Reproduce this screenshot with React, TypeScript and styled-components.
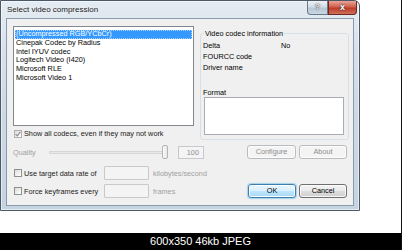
import { Fragment } from "react";
import styled, { createGlobalStyle } from "styled-components";

const GlobalStyle = createGlobalStyle`
  html, body {
    margin: 0;
    padding: 0;
    background: #fff;
  }
  body {
    font-family: "Liberation Sans", Arial, sans-serif;
    font-size: 7.3px;
    color: #000;
  }
`;

const codecs = [
  "(Uncompressed RGB/YCbCr)",
  "Cinepak Codec by Radius",
  "Intel IYUV codec",
  "Logitech Video (I420)",
  "Microsoft RLE",
  "Microsoft Video 1",
];

const info = [
  ["Delta", "No"],
  ["FOURCC code", ""],
  ["Driver name", ""],
];

function CheckMark({ muted }: { muted?: boolean }) {
  return (
    <svg width="6" height="6" viewBox="0 0 6 6">
      <path
        d="M0.6 3.1 L2.3 4.8 L5.4 0.8"
        fill="none"
        stroke={muted ? "#8c8c8c" : "#2a4a6e"}
        strokeWidth="1.1"
      />
    </svg>
  );
}

export default function App() {
  return (
    <>
      <GlobalStyle />
      <Page>
        <Stage>
          <Window>
            <TitleBar>
              <Title>Select video compression</Title>
              <Caption>
                <CaptionButton $w={21}>?</CaptionButton>
                <CaptionButton $w={29} $close>
                  x
                </CaptionButton>
              </Caption>
            </TitleBar>
            <Client>
              <TopRow>
                <LeftCol>
                  <ListBox>
                    {codecs.map((c, i) => (
                      <ListItem key={c} $selected={i === 0}>
                        {c}
                      </ListItem>
                    ))}
                  </ListBox>
                  <CheckRow>
                    <Check $muted>
                      <CheckMark muted />
                    </Check>
                    <CheckLabel>Show all codecs, even if they may not work</CheckLabel>
                  </CheckRow>
                </LeftCol>
                <GroupBox>
                  <Legend>Video codec information</Legend>
                  <InfoGrid>
                    {info.map(([k, v]) => (
                      <Fragment key={k}>
                        <span>{k}</span>
                        <span>{v}</span>
                      </Fragment>
                    ))}
                  </InfoGrid>
                  <FormatLabel>Format</FormatLabel>
                  <FormatBox />
                </GroupBox>
              </TopRow>

              <QualityRow>
                <QualityLabel>Quality</QualityLabel>
                <Slider>
                  <Track />
                  <Thumb />
                </Slider>
                <NumberBox>100</NumberBox>
                <Spacer />
                <Buttons>
                  <Button $w={49} $disabled>
                    Configure
                  </Button>
                  <Button $w={48} $disabled>
                    About
                  </Button>
                </Buttons>
              </QualityRow>

              <OptionRow $top={7}>
                <Check />
                <OptionLabel>Use target data rate of</OptionLabel>
                <TextBox />
                <Unit>kilobytes/second</Unit>
              </OptionRow>

              <OptionRow $top={4}>
                <Check />
                <OptionLabel>Force keyframes every</OptionLabel>
                <TextBox />
                <Unit>frames</Unit>
                <Spacer />
                <Buttons>
                  <Button $w={48} $default>
                    OK
                  </Button>
                  <Button $w={48}>Cancel</Button>
                </Buttons>
              </OptionRow>
            </Client>
          </Window>
        </Stage>
        <Footer>600x350 46kb JPEG</Footer>
      </Page>
    </>
  );
}

const Page = styled.div`
  width: 402px;
  height: 250px;
  box-sizing: border-box;
  border-right: 1px solid #111;
  display: flex;
  flex-direction: column;
  overflow: hidden;
`;

const Stage = styled.div`
  height: 233px;
  background: #fff;
`;

const Footer = styled.div`
  height: 17px;
  background: #000;
  color: #fff;
  font-size: 11px;
  line-height: 17px;
  text-align: center;
`;

const Window = styled.div`
  width: 360px;
  height: 211px;
  box-sizing: border-box;
  border: 1px solid #4a5867;
  border-top-right-radius: 6px;
  background: linear-gradient(180deg, #e4ebf2 0%, #cfdae6 45%, #c6d3e0 100%);
  box-shadow: inset 0 0 0 1px rgba(255, 255, 255, 0.55);
  padding: 0 5px 4px 5px;
  display: flex;
  flex-direction: column;
`;

const TitleBar = styled.div`
  height: 17px;
  display: flex;
  align-items: flex-start;
`;

const Title = styled.div`
  font-size: 8px;
  line-height: 18px;
  padding-left: 1px;
  color: #1a1a1a;
  text-shadow: 0 0 4px rgba(255, 255, 255, 0.9);
`;

const Caption = styled.div`
  margin-left: auto;
  margin-right: -3px;
  display: flex;
`;

const CaptionButton = styled.div<{ $w: number; $close?: boolean }>`
  width: ${(p) => p.$w}px;
  height: 14px;
  box-sizing: border-box;
  border: 1px solid ${(p) => (p.$close ? "#6b2a22" : "#6a7a8a")};
  border-top: none;
  border-radius: ${(p) => (p.$close ? "0 0 4px 0" : "0 0 0 4px")};
  background: ${(p) =>
    p.$close
      ? "linear-gradient(180deg, #e8a597 0%, #d0614f 45%, #bd3b2a 55%, #d0705a 100%)"
      : "linear-gradient(180deg, #eef2f6 0%, #d2dce6 45%, #b8c6d4 55%, #cad7e3 100%)"};
  color: #fff;
  font-weight: bold;
  font-size: ${(p) => (p.$close ? "9px" : "8px")};
  line-height: 12px;
  text-align: center;
  text-shadow: 0 0 2px #333, 0 0 1px #333;
`;

const Client = styled.div`
  flex: 1;
  background: #f0f0f0;
  border: 1px solid #8a9bad;
  padding: 7px 0 0 6px;
  display: flex;
  flex-direction: column;
`;

const TopRow = styled.div`
  display: flex;
  align-items: flex-start;
`;

const LeftCol = styled.div`
  width: 181px;
  display: flex;
  flex-direction: column;
`;

const ListBox = styled.div`
  height: 100px;
  box-sizing: border-box;
  border: 1px solid #828790;
  background: #fff;
  padding: 3px 1px 0 1px;
`;

const ListItem = styled.div<{ $selected?: boolean }>`
  height: 8.8px;
  line-height: 8.8px;
  padding-left: 1px;
  white-space: nowrap;
  color: ${(p) => (p.$selected ? "#fff" : "#000")};
  background: ${(p) => (p.$selected ? "#3399ff" : "transparent")};
  outline: ${(p) => (p.$selected ? "1px dotted #a9d0ff" : "none")};
  outline-offset: -1px;
`;

const CheckRow = styled.div`
  margin-top: 4px;
  height: 8px;
  display: flex;
  align-items: center;
`;

const Check = styled.span<{ $muted?: boolean }>`
  width: 8px;
  height: 8px;
  box-sizing: border-box;
  flex: none;
  margin-left: 1px;
  border: 1px solid ${(p) => (p.$muted ? "#b1b1b1" : "#8e8f8f")};
  background: linear-gradient(135deg, #dadada 0%, #f6f6f6 70%, #fff 100%);
  display: flex;
  align-items: center;
  justify-content: center;
`;

const CheckLabel = styled.span`
  margin-left: 2px;
  line-height: 8px;
  white-space: nowrap;
  color: #222;
`;

const GroupBox = styled.div`
  position: relative;
  width: 149px;
  height: 107px;
  box-sizing: border-box;
  margin: 7px 0 0 6px;
  border: 1px solid #d5dfe5;
  border-radius: 3px;
  padding: 6px 0 0 2px;
  display: flex;
  flex-direction: column;
`;

const Legend = styled.span`
  position: absolute;
  top: -5px;
  left: 3px;
  padding: 0 1px;
  line-height: 9px;
  background: #f0f0f0;
  white-space: nowrap;
`;

const InfoGrid = styled.div`
  display: grid;
  grid-template-columns: 78px auto;
  grid-auto-rows: 11px;
  line-height: 11px;
`;

const FormatLabel = styled.div`
  margin-top: 15px;
  line-height: 9px;
`;

const FormatBox = styled.div`
  width: 140px;
  height: 38px;
  box-sizing: border-box;
  margin-left: 1px;
  border: 1px solid #a9acb2;
  background: #fff;
`;

const QualityRow = styled.div`
  margin-top: 5px;
  height: 14px;
  display: flex;
  align-items: center;
  padding-right: 6px;
`;

const QualityLabel = styled.span`
  width: 36px;
  color: #a0a0a0;
`;

const Slider = styled.div`
  position: relative;
  width: 119px;
  height: 14px;
  display: flex;
  align-items: center;
`;

const Track = styled.div`
  flex: 1;
  height: 3px;
  box-sizing: border-box;
  margin-right: 3px;
  border: 1px solid #d6d6d6;
  background: #e7eaea;
`;

const Thumb = styled.div`
  position: absolute;
  right: 0;
  top: 0;
  width: 6px;
  height: 14px;
  box-sizing: border-box;
  border: 1px solid #b4b4b4;
  border-radius: 2px;
  background: linear-gradient(90deg, #fafafa, #e6e6e6);
`;

const NumberBox = styled.div`
  width: 26px;
  height: 13px;
  box-sizing: border-box;
  margin-left: 10px;
  border: 1px solid #c7c9cc;
  background: #f4f4f4;
  color: #8d8d8d;
  text-align: right;
  padding-right: 4px;
  line-height: 11px;
`;

const Spacer = styled.div`
  flex: 1;
`;

const Buttons = styled.div`
  display: flex;
  gap: 3px;
`;

const Button = styled.div<{ $w: number; $disabled?: boolean; $default?: boolean }>`
  width: ${(p) => p.$w}px;
  height: 14px;
  box-sizing: border-box;
  border: 1px solid
    ${(p) => (p.$disabled ? "#b8bcbf" : p.$default ? "#3c7fb1" : "#707070")};
  border-radius: 3px;
  background: ${(p) =>
    p.$disabled
      ? "#f4f4f4"
      : p.$default
      ? "linear-gradient(180deg, #eaf6fd 0%, #d9f0fc 50%, #bee6fd 51%, #a7d9f5 100%)"
      : "linear-gradient(180deg, #f2f2f2 0%, #ebebeb 50%, #dddddd 51%, #cfcfcf 100%)"};
  box-shadow: ${(p) =>
    p.$default
      ? "0 0 1px 1px rgba(110, 190, 230, 0.6), inset 0 0 0 1px #fff"
      : "inset 0 0 0 1px rgba(255,255,255,0.8)"};
  color: ${(p) => (p.$disabled ? "#8d8d8d" : "#000")};
  line-height: 12px;
  text-align: center;
`;

const OptionRow = styled.div<{ $top: number }>`
  margin-top: ${(p) => p.$top}px;
  height: 14px;
  display: flex;
  align-items: center;
  padding-right: 6px;
`;

const OptionLabel = styled.span`
  width: 80px;
  margin-left: 2px;
  white-space: nowrap;
  color: #222;
`;

const TextBox = styled.div`
  width: 45px;
  height: 14px;
  box-sizing: border-box;
  border: 1px solid #c7c9cc;
  border-radius: 1px;
  background: #f4f4f4;
`;

const Unit = styled.span`
  margin-left: 4px;
  color: #a0a0a0;
  white-space: nowrap;
`;
